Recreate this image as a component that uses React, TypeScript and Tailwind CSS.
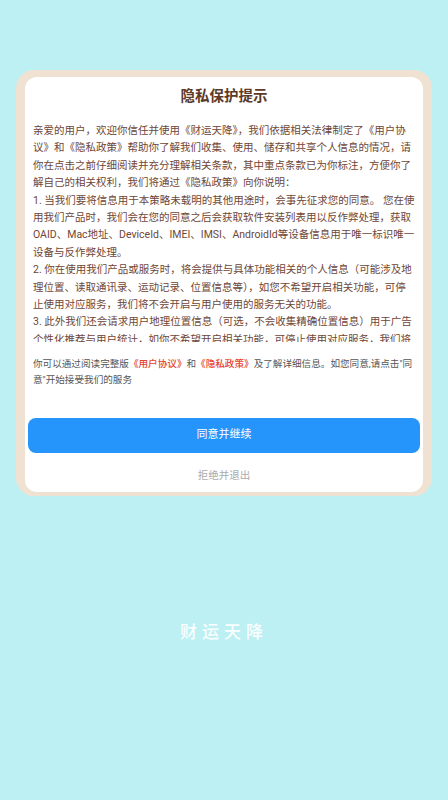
const policy = [
  '亲爱的用户，欢迎你信任并使用《财运天降》，我们依据相关法律制定了《用户协议》和《隐私政策》帮助你了解我们收集、使用、储存和共享个人信息的情况，请你在点击之前仔细阅读并充分理解相关条款，其中重点条款已为你标注，方便你了解自己的相关权利，我们将通过《隐私政策》向你说明：',
  '1. 当我们要将信息用于本策略未载明的其他用途时，会事先征求您的同意。 您在使用我们产品时，我们会在您的同意之后会获取软件安装列表用以反作弊处理，获取OAID、Mac地址、DeviceId、IMEI、IMSI、AndroidId等设备信息用于唯一标识唯一设备与反作弊处理。',
  '2. 你在使用我们产品或服务时，将会提供与具体功能相关的个人信息（可能涉及地理位置、读取通讯录、运动记录、位置信息等），如您不希望开启相关功能，可停止使用对应服务，我们将不会开启与用户使用的服务无关的功能。',
  '3. 此外我们还会请求用户地理位置信息（可选，不会收集精确位置信息）用于广告个性化推荐与用户统计，如你不希望开启相关功能，可停止使用对应服务，我们将不会开启与用户使用的服务无关的功能。',
]

export default function App() {
  return (
    <div
      className="min-h-[800px] w-full bg-[#bdf0f3] flex flex-col items-center pt-[70px]"
      style={{ fontFamily: 'Roboto, "Noto Sans CJK SC", sans-serif' }}
    >
      {/* dialog */}
      <div className="w-[416px] rounded-[18px] bg-[#efe2d2] pt-[7px] px-[9px] pb-[4px]">
        <div className="rounded-[12px] bg-white pt-[10px] pb-[8px] px-[3px]">
          <h1 className="text-center text-[14.5px] leading-[20px] font-bold text-[#5b3a29]">
            隐私保护提示
          </h1>

          {/* scrolling text */}
          <div className="mt-[15px] px-[5px] h-[220px] overflow-hidden text-[10.5px] leading-[17.4px] text-[#6e4636]">
            {policy.map((p, i) => (
              <p key={i}>{p}</p>
            ))}
          </div>

          <p className="mt-[14px] px-[5px] text-[9.6px] leading-[15.5px] text-[#555555]">
            你可以通过阅读完整版<span className="text-[#e5432f] font-medium">《用户协议》</span>和<span className="text-[#e5432f] font-medium">《隐私政策》</span>及了解详细信息。如您同意,请点击"同意"开始接受我们的服务
          </p>

          <button className="mt-[31px] w-full h-[35px] rounded-[8px] bg-[#2594fb] text-white text-[11px]">
            同意并继续
          </button>
          <div className="mt-[15px] text-center text-[10.5px] leading-[16px] text-[#ababab]">
            拒绝并退出
          </div>
        </div>
      </div>

      <div className="mt-[124px] text-[17px] leading-[24px] font-medium tracking-[5px] text-white/95">
        财运天降
      </div>
    </div>
  )
}
